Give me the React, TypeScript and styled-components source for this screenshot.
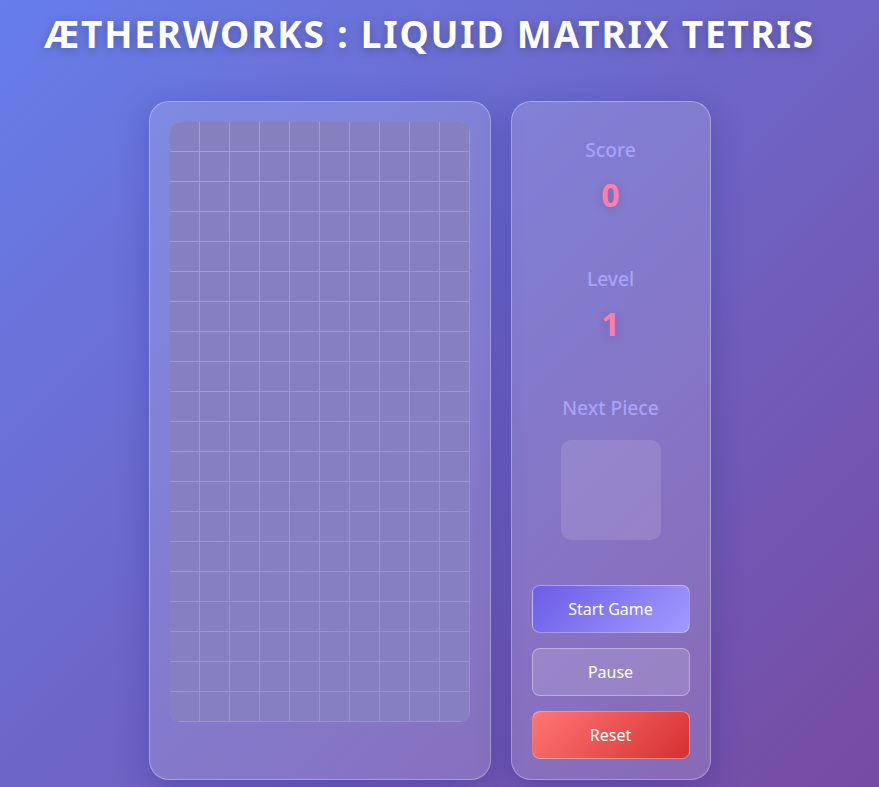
import React from 'react'
import styled, { createGlobalStyle } from 'styled-components'

const COLS = 10
const ROWS = 20

const GlobalStyle = createGlobalStyle`
  html, body {
    margin: 0;
    padding: 0;
  }
  body {
    min-height: 100vh;
    font-family: "Noto Sans", "Open Sans", sans-serif;
    background: linear-gradient(135deg, #667eea 0%, #764ba2 100%);
    background-attachment: fixed;
    color: #fff;
    overflow: hidden;
  }
`

const Page = styled.div`
  display: flex;
  flex-direction: column;
  align-items: center;
  padding: 9px 20px 0 0;
`

const Title = styled.h1`
  margin: 0 0 43px;
  font-size: 37px;
  font-weight: 700;
  line-height: 49px;
  letter-spacing: 1.8px;
  color: #fff;
  text-shadow: 0 2px 10px rgba(0, 0, 0, 0.25);
`

const GameArea = styled.div`
  display: flex;
  gap: 20px;
  align-items: stretch;
`

const Glass = styled.div`
  background: rgba(255, 255, 255, 0.15);
  border: 1px solid rgba(255, 255, 255, 0.3);
  border-radius: 20px;
  box-shadow: 0 8px 32px rgba(31, 38, 135, 0.3);
  padding: 20px;
`

const BoardPanel = styled(Glass)``

const Board = styled.div`
  display: grid;
  grid-template-columns: repeat(${COLS}, 29px);
  grid-template-rows: repeat(${ROWS}, 29px);
  gap: 1px;
  width: 300px;
  height: 600px;
  background: rgba(255, 255, 255, 0.2);
  border-radius: 10px;
  overflow: hidden;
`

const Cell = styled.div`
  background: #8680c0;
`

const SidePanel = styled(Glass)`
  width: 158px;
  display: flex;
  flex-direction: column;
  align-items: stretch;
`

const Stat = styled.div`
  display: flex;
  flex-direction: column;
  align-items: center;
  padding: 15px 0;
  margin-bottom: 19px;
`

const StatLabel = styled.div`
  font-size: 19.2px;
  font-weight: 500;
  line-height: 26px;
  color: #a8a2f8;
`

const StatValue = styled.div`
  margin-top: 10px;
  font-size: 32px;
  font-weight: 700;
  line-height: 44px;
  color: #fd7fa6;
  text-shadow: 0 2px 8px rgba(80, 40, 140, 0.25);
`

const NextLabel = styled(StatLabel)`
  margin-bottom: 19px;
`

const NextBox = styled.div`
  width: 100px;
  height: 100px;
  border-radius: 10px;
  background: rgba(225, 215, 240, 0.17);
`

const Buttons = styled.div`
  display: flex;
  flex-direction: column;
  gap: 15px;
  margin-top: 11px;
`

const Button = styled.button<{ $variant: 'start' | 'pause' | 'reset' }>`
  height: 48px;
  border-radius: 8px;
  border: 1px solid rgba(255, 255, 255, 0.35);
  font-family: "Noto Sans", "Open Sans", sans-serif;
  font-size: 16px;
  color: #fff;
  cursor: pointer;
  background: ${p =>
    p.$variant === 'start'
      ? 'linear-gradient(135deg, #6c5ce7 0%, #a29bfe 100%)'
      : p.$variant === 'reset'
        ? 'linear-gradient(135deg, #ff7675 0%, #d63031 100%)'
        : 'rgba(255, 255, 255, 0.15)'};
`

const App = () => {
  const cells = Array.from({ length: COLS * ROWS })

  return (
    <>
      <GlobalStyle />
      <Page>
        <Title>ÆTHERWORKS : LIQUID MATRIX TETRIS</Title>
        <GameArea>
          <BoardPanel>
            <Board>
              {cells.map((_, i) => <Cell key={i} />)}
            </Board>
          </BoardPanel>
          <SidePanel>
            <Stat>
              <StatLabel>Score</StatLabel>
              <StatValue>0</StatValue>
            </Stat>
            <Stat>
              <StatLabel>Level</StatLabel>
              <StatValue>1</StatValue>
            </Stat>
            <Stat>
              <NextLabel>Next Piece</NextLabel>
              <NextBox />
            </Stat>
            <Buttons>
              <Button $variant="start">Start Game</Button>
              <Button $variant="pause">Pause</Button>
              <Button $variant="reset">Reset</Button>
            </Buttons>
          </SidePanel>
        </GameArea>
      </Page>
    </>
  )
}

export default App
